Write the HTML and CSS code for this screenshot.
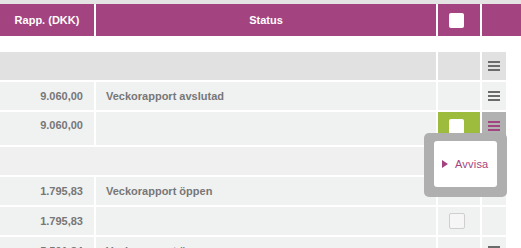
FILE: index.html
```html
<!DOCTYPE html>
<html lang="sv">
<head>
<meta charset="utf-8">
<title>Veckorapporter</title>
<link rel="stylesheet" href="styles.css">
</head>
<body>
<div class="topstrip"></div>
<div class="head">
  <div class="hc c1">Rapp. (DKK)</div>
  <div class="hc c2">Status</div>
  <div class="hc c3"><span class="cb cb-white"></span></div>
  <div class="hc c4h"></div>
</div>
<div class="list">
  <div class="row group dark">
    <div class="cell cspan"></div>
    <div class="cell c3"></div>
    <div class="cell c4"><span class="burger"><i></i><i></i><i></i></span></div>
  </div>
  <div class="row">
    <div class="cell c1 num">9.060,00</div>
    <div class="cell c2 txt">Veckorapport avslutad</div>
    <div class="cell c3"></div>
    <div class="cell c4"><span class="burger"><i></i><i></i><i></i></span></div>
  </div>
  <div class="row tall">
    <div class="cell c1 num">9.060,00</div>
    <div class="cell c2 txt"></div>
    <div class="cell c3 green"><span class="cb cb-white"></span></div>
    <div class="cell c4 active">
      <span class="burger purple"><i></i><i></i><i></i></span>
      <div class="popup">
        <div class="popup-inner">
          <span class="tri"></span><span class="plabel">Avvisa</span>
        </div>
      </div>
    </div>
  </div>
  <div class="row group">
    <div class="cell cspan"></div>
    <div class="cell c3"></div>
    <div class="cell c4"><span class="burger"><i></i><i></i><i></i></span></div>
  </div>
  <div class="row">
    <div class="cell c1 num">1.795,83</div>
    <div class="cell c2 txt">Veckorapport öppen</div>
    <div class="cell c3"></div>
    <div class="cell c4"><span class="burger"><i></i><i></i><i></i></span></div>
  </div>
  <div class="row">
    <div class="cell c1 num">1.795,83</div>
    <div class="cell c2 txt"></div>
    <div class="cell c3"><span class="cb cb-border"></span></div>
    <div class="cell c4"></div>
  </div>
  <div class="row">
    <div class="cell c1 num">5.591,84</div>
    <div class="cell c2 txt">Veckorapport öppen</div>
    <div class="cell c3"></div>
    <div class="cell c4"><span class="burger"><i></i><i></i><i></i></span></div>
  </div>
</div>
</body>
</html>
```
FILE: styles.css
```css
html, body {
  margin: 0;
  padding: 0;
  background: #ffffff;
  font-family: "Liberation Sans", Arial, sans-serif;
  font-size: 11px;
  overflow: hidden;
}

.topstrip {
  height: 4px;
  background: #e4e4e4;
}

.head {
  display: flex;
  gap: 2px;
  height: 32px;
}

.hc {
  background: #a3437f;
  color: #ffffff;
  font-weight: bold;
  display: flex;
  align-items: center;
  justify-content: center;
}

.c1 { width: 94px; flex: none; }
.c2 { width: 340px; flex: none; }
.cspan { width: 436px; flex: none; }
.c3 { width: 42px; flex: none; }
.c4 { width: 24px; flex: none; }
.c4h { flex: 1; }

.hc.c3 {
  justify-content: flex-start;
  padding-left: 11px;
  box-sizing: border-box;
}

.list {
  margin-top: 16px;
  display: flex;
  flex-direction: column;
  gap: 2px;
}

.row {
  display: flex;
  gap: 2px;
  height: 28px;
}

.row.tall {
  height: 33px;
}

.cell {
  background: #f0f1f1;
  color: #777777;
  font-weight: bold;
  line-height: 28px;
  box-sizing: border-box;
  display: flex;
  align-items: center;
}

.row.group .cell {
  background: #f0f0f0;
}

.row.group.dark .cell {
  background: #e1e1e1;
}

.cell.num {
  justify-content: flex-end;
  padding-right: 11px;
}

.cell.txt {
  padding-left: 10px;
}

.row.tall .cell {
  align-items: flex-start;
  line-height: 26px;
}

.cell.c3 {
  padding-left: 11px;
}

.row.tall .cell.c3 {
  padding-top: 7px;
}

.cell.c4 {
  justify-content: center;
}

.cell.green {
  background: #9dbb3c;
}

.cell.active {
  background: #b1b1b1;
  position: relative;
  padding-top: 9px;
}

.cb {
  display: block;
  width: 15px;
  height: 15px;
  border-radius: 2px;
  box-sizing: border-box;
}

.cb-white {
  background: #ffffff;
}

.cb-border {
  width: 16px;
  height: 16px;
  background: #f6f6f6;
  border: 1px solid #cfcfcf;
}

.burger {
  display: flex;
  flex-direction: column;
  gap: 2px;
  width: 12px;
}

.burger i {
  display: block;
  height: 2px;
  background: #6b6b6b;
}

.burger.purple i {
  background: #a3437f;
}

.popup {
  position: absolute;
  top: 21px;
  right: -1px;
  width: 83px;
  height: 64px;
  box-sizing: border-box;
  background: #afafaf;
  border-radius: 5px;
  padding: 8px 10px 10px 10px;
  z-index: 2;
}

.popup-inner {
  background: #ffffff;
  border-radius: 3px;
  height: 100%;
  display: flex;
  align-items: center;
  padding-left: 8px;
  gap: 7px;
}

.tri {
  width: 0;
  height: 0;
  border-left: 6px solid #a3437f;
  border-top: 4.5px solid transparent;
  border-bottom: 4.5px solid transparent;
}

.plabel {
  color: #a3437f;
  font-weight: normal;
  font-size: 11px;
  line-height: 14px;
  letter-spacing: 0.2px;
}
```
